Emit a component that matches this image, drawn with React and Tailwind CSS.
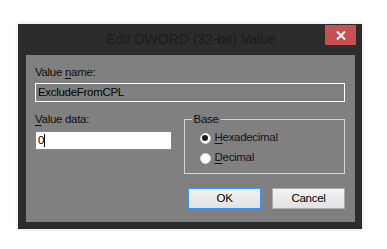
import React from "react";

const font = { fontFamily: '"Liberation Sans", Arial, sans-serif' };

const Radio = ({ checked, label, hotkey }) => (
  <label className="flex items-center h-[20px] gap-[4px]">
    <span className="w-[11px] h-[11px] rounded-full bg-white border border-[#d8d8d8] flex items-center justify-center">
      {checked && <span className="w-[6px] h-[6px] rounded-full bg-[#1a1a1a]" />}
    </span>
    <span className="text-[11.5px] tracking-[-0.3px] text-[#141420]">
      <span className="underline underline-offset-2">{hotkey}</span>
      {label}
    </span>
  </label>
);

const Button = ({ children, focused }) => (
  <button
    className={
      "w-[73px] h-[21px] text-[11.5px] text-black bg-gradient-to-b from-[#f2f2f2] to-[#e2e2e2] border " +
      (focused ? "border-[#3399ff]" : "border-[#acacac]")
    }
  >
    {children}
  </button>
);

export default function App() {
  return (
    <div className="w-[387px] h-[249px] bg-white overflow-hidden pt-[24px] pl-[18px]" style={font}>
      <div className="w-[344px] h-[205px] bg-[#2c2c2c] shadow-[0_0_4px_rgba(0,0,0,0.15)] flex flex-col">
        <div className="h-[31px] flex items-start relative">
          <div className="flex-1 text-center text-[14px] leading-[31px] text-[#1b1b1b] pl-[2px]">
            Edit DWORD (32-bit) Value
          </div>
          <div className="absolute right-[6px] top-[1px] w-[31px] h-[20px] bg-[#c75050] flex items-center justify-center">
            <svg width="10" height="9" viewBox="0 0 10 9">
              <path d="M1 0.5 L9 8.5 M9 0.5 L1 8.5" stroke="white" strokeWidth="2" />
            </svg>
          </div>
        </div>
        <div className="ml-[8px] w-[329px] h-[167px] bg-[#808080] pl-[9px] pr-[10px] pt-[10px] text-[11.5px] tracking-[-0.3px] text-[#0e0e0e] flex flex-col">
          <div className="leading-[14px]">
            Value <span className="underline underline-offset-2">n</span>ame:
          </div>
          <div className="mt-[4px] h-[19px] w-[310px] border border-white bg-[#808080] pl-[2px] leading-[17px] text-black">
            ExcludeFromCPL
          </div>
          <div className="flex mt-[10px]">
            <div className="w-[137px] flex flex-col">
              <div className="leading-[14px]">
                <span className="underline underline-offset-2">V</span>alue data:
              </div>
              <div className="mt-[5px] h-[19px] border border-[#3399ff] bg-white pl-[2px] leading-[17px] text-black flex items-center">
                0<span className="w-[1px] h-[13px] bg-black" />
              </div>
            </div>
            <fieldset className="ml-[12px] w-[162px] h-[62px] border border-[#d4d4d4] pl-[15px] pt-[2px]">
              <legend className="ml-[-8px] px-[2px] leading-[14px]">Base</legend>
              <Radio checked hotkey="H" label="exadecimal" />
              <Radio hotkey="D" label="ecimal" />
            </fieldset>
          </div>
          <div className="mt-[14px] flex justify-end gap-[11px]">
            <Button focused>OK</Button>
            <Button>Cancel</Button>
          </div>
        </div>
      </div>
    </div>
  );
}
